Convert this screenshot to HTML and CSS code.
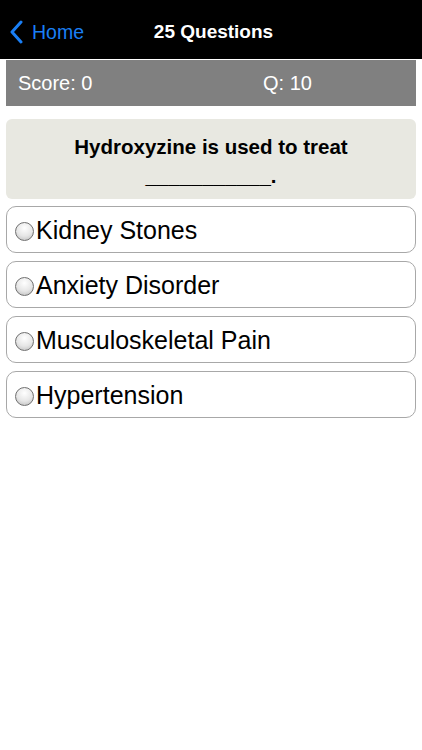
FILE: index.html
```html
<!DOCTYPE html>
<html lang="en">
<head>
    <meta charset="UTF-8">
    <meta name="viewport" content="width=device-width, initial-scale=1.0">
    <title>25 Questions</title>
    <link rel="stylesheet" href="styles.css">
</head>
<body>
    <div class="navbar">
        <a class="back" href="#">
            <svg class="chevron" width="14" height="24" viewBox="0 0 14 24">
                <path d="M12 2 L3 12 L12 22" fill="none" stroke="#1a7ff5" stroke-width="3" stroke-linecap="round" stroke-linejoin="round"/>
            </svg>
            <span>Home</span>
        </a>
        <div class="title">25 Questions</div>
    </div>

    <div class="content">
        <div class="scorebar">
            <span class="score">Score: 0</span>
            <span class="qnum">Q: 10</span>
        </div>

        <div class="question">
            Hydroxyzine is used to treat<br>___________.
        </div>

        <div class="answers">
            <label class="answer"><span class="radio"></span>Kidney Stones</label>
            <label class="answer"><span class="radio"></span>Anxiety Disorder</label>
            <label class="answer"><span class="radio"></span>Musculoskeletal Pain</label>
            <label class="answer"><span class="radio"></span>Hypertension</label>
        </div>
    </div>
</body>
</html>
```

FILE: styles.css
```css
/* General styling */
body {
    margin: 0;
    font-family: "Liberation Sans", Arial, sans-serif;
    background-color: #ffffff;
    color: #000000;
}
.navbar {
    position: relative;
    height: 59px;
    background-color: #000000;
    display: flex;
    align-items: center;
    justify-content: center;
}
.back {
    position: absolute;
    left: 9px;
    top: 20px;
    display: flex;
    align-items: center;
    gap: 9px;
    color: #1a7ff5; /* iOS blue */
    text-decoration: none;
    font-size: 19.5px;
}
.title {
    color: #ffffff;
    font-size: 19px;
    font-weight: bold;
    padding-top: 5px;
    margin-left: 5px;
}
.content {
    padding: 1px 6px 0 6px;
}
.scorebar {
    display: flex;
    height: 46px;
    align-items: center;
    background-color: #808080;
    color: #ffffff;
    font-size: 20px;
    padding-left: 12px;
}
.score {
    width: 245px;
}
.question {
    margin-top: 13px;
    background-color: #e8e8e1;
    border-radius: 6px;
    height: 80px;
    box-sizing: border-box;
    padding-top: 13px;
    text-align: center;
    font-weight: bold;
    font-size: 20.5px;
    line-height: 29px;
}
.answers {
    margin-top: 7px;
    display: flex;
    flex-direction: column;
    gap: 8px;
}
.answer {
    display: flex;
    align-items: center;
    height: 47px;
    box-sizing: border-box;
    border: 1px solid #a8a8a8;
    border-radius: 10px;
    padding: 2px 0 0 8px;
    font-size: 25px;
    cursor: pointer;
}
.radio {
    width: 17px;
    height: 17px;
    border-radius: 50%;
    border: 1px solid #707070;
    background: radial-gradient(circle at 50% 30%, #ffffff 0%, #e6e6e6 55%, #b8b8b8 100%);
    margin-right: 2px;
    margin-top: 1px;
    flex-shrink: 0;
}
```
